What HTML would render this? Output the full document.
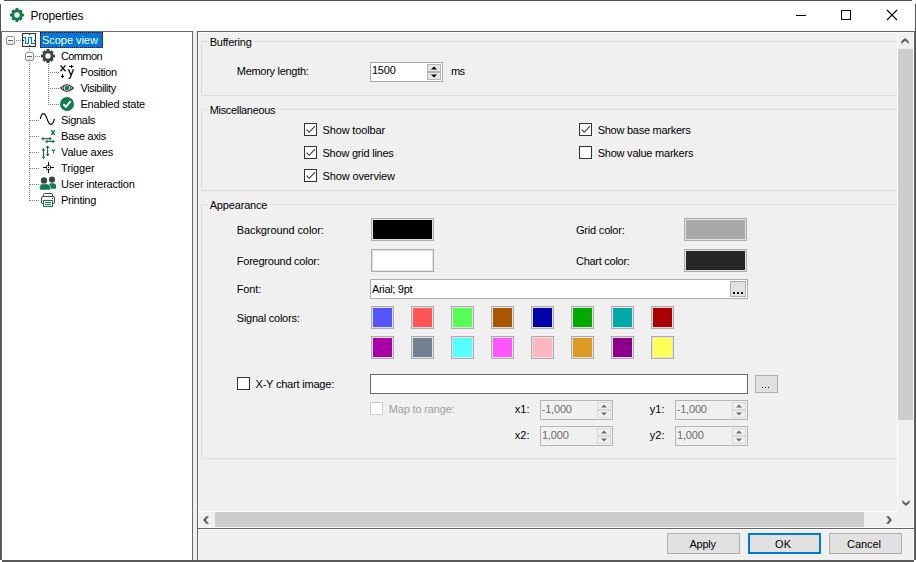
<!DOCTYPE html>
<html>
<head>
<meta charset="utf-8">
<title>Properties</title>
<style>
html,body{margin:0;padding:0;}
body{width:916px;height:562px;position:relative;overflow:hidden;background:#fff;font-family:"Liberation Sans",sans-serif;font-size:11px;color:#000;}
.a{position:absolute;}
.t{position:absolute;white-space:nowrap;line-height:14px;height:14px;font-size:11px;}
.tr{position:absolute;white-space:nowrap;line-height:16px;height:16px;font-size:11px;}
.gb{position:absolute;border:1px solid #dcdcdc;box-sizing:border-box;}
.gl{position:absolute;background:#f0f0f0;padding:0 2px 0 1px;white-space:nowrap;line-height:14px;height:14px;font-size:11px;}
.cb{position:absolute;width:13px;height:13px;box-sizing:border-box;border:1px solid #333;background:#fff;}
.cb.dis{border-color:#ccc;}
.sw{position:absolute;box-sizing:border-box;border:1px solid #adadad;background:#e1e1e1;}
.sw i{position:absolute;left:1px;top:1px;right:1px;bottom:1px;}
.sp{position:absolute;box-sizing:border-box;border:1px solid #a9a9a9;background:#fff;width:73px;height:20px;}
.sp.dis{border-color:#b4b4ba;background:#f0f0f0;color:#6d6d6d;}
.sb{position:absolute;left:56px;width:14px;height:8px;background:#e6e6e6;box-sizing:border-box;border:1px solid #b4b4b4;overflow:visible;}
.sb svg{position:absolute;left:-1px;top:-1px;}
.sb.dis{background:#efefef;border-color:#d9d9d9;}
.hd{position:absolute;height:1px;background-image:linear-gradient(to right,#808080 50%,transparent 50%);background-size:2px 1px;}
.vd{position:absolute;width:1px;background-image:linear-gradient(to bottom,#808080 50%,transparent 50%);background-size:1px 2px;}
.ex{width:9px;height:9px;box-sizing:border-box;border:1px solid #919191;border-radius:2px;background:linear-gradient(#fff,#fff 40%,#dcdcdc);}
.ex i{position:absolute;left:1px;top:3px;width:5px;height:1px;background:#4b63a7;}
.btn{position:absolute;box-sizing:border-box;border:1px solid #adadad;background:#e1e1e1;text-align:center;font-size:12px;}
</style>
</head>
<body>
<!-- window frame -->
<div class="a" style="left:4px;top:0;width:908px;height:1px;background:#555;"></div>
<div class="a" style="left:0;top:4px;width:1px;height:556px;background:#555;"></div>
<div class="a" style="left:915px;top:4px;width:1px;height:556px;background:#555;"></div>
<div class="a" style="left:2px;top:560px;width:912px;height:2px;background:#5a5a5a;"></div>

<div class="a" style="left:1px;top:558px;width:2px;height:2px;background:#5a5a5a;"></div>
<div class="a" style="left:0px;top:558px;width:1px;height:2px;background:#555;"></div>
<!-- title bar -->
<svg class="a" style="left:10px;top:8px;" width="14" height="14" viewBox="0 0 14 14"><g fill="#107c4c"><circle cx="7" cy="7" r="5.4"/><rect x="5.4" y="0" width="3.2" height="14" rx="0.9"/><rect x="0" y="5.4" width="14" height="3.2" rx="0.9"/><rect x="5.4" y="0.3" width="3.2" height="13.4" rx="0.9" transform="rotate(45 7 7)"/><rect x="5.4" y="0.3" width="3.2" height="13.4" rx="0.9" transform="rotate(-45 7 7)"/></g><circle cx="7" cy="7" r="2.7" fill="#fff"/></svg>
<div class="a" style="left:30.5px;top:8px;font-size:12px;line-height:16px;white-space:nowrap;letter-spacing:-0.2px;">Properties</div>
<div class="a" style="left:796px;top:15px;width:10px;height:1px;background:#000;"></div>
<div class="a" style="left:841px;top:10px;width:10px;height:10px;box-sizing:border-box;border:1px solid #000;"></div>
<svg class="a" style="left:886px;top:9px;" width="12" height="12" viewBox="0 0 12 12"><path d="M1 1 L11 11 M11 1 L1 11" stroke="#000" stroke-width="1.1" fill="none"/></svg>

<!-- tree panel -->
<div class="a" id="tree" style="left:1px;top:31px;width:192px;height:529px;box-sizing:border-box;border:1px solid #6a6a6a;border-bottom:none;background:#fff;"></div>


<!-- tree content -->
<div class="a" style="left:40px;top:32px;width:63px;height:16px;background:#0078d7;box-sizing:border-box;border:1px dotted #000;"></div>
<!-- tree lines -->
<div class="hd" style="left:16px;top:40px;width:6px;"></div>
<div class="vd" style="left:29px;top:48px;width:1px;height:4px;"></div>
<div class="hd" style="left:35px;top:56px;width:6px;"></div>
<div class="vd" style="left:29px;top:62px;height:139px;"></div>
<div class="vd" style="left:48px;top:64px;height:41px;"></div>
<div class="hd" style="left:50px;top:72px;width:10px;"></div>
<div class="hd" style="left:50px;top:88px;width:10px;"></div>
<div class="hd" style="left:50px;top:104px;width:10px;"></div>
<div class="hd" style="left:30px;top:120px;width:10px;"></div>
<div class="hd" style="left:30px;top:136px;width:10px;"></div>
<div class="hd" style="left:30px;top:152px;width:10px;"></div>
<div class="hd" style="left:30px;top:168px;width:10px;"></div>
<div class="hd" style="left:30px;top:184px;width:10px;"></div>
<div class="hd" style="left:30px;top:200px;width:10px;"></div>
<!-- icons -->
<svg class="a" style="left:22px;top:33px;" width="14" height="14" viewBox="0 0 14 14"><rect x="0.55" y="0.55" width="12.9" height="12.9" fill="#fff" stroke="#2b3535" stroke-width="1.1"/><path d="M7.5 1 V2 M7.5 12 V13 M1 7.5 H2 M12 7.5 H13" stroke="#2b3535" stroke-width="1.1"/><path d="M1 4.5 H3.5 V10.5 H6.5 V4.5 H9.5 V10.5 H13" stroke="#0a78d4" stroke-width="1.15" fill="none"/></svg>
<svg class="a" style="left:41px;top:49px;" width="14" height="14" viewBox="0 0 14 14"><g fill="#3b4546"><circle cx="7" cy="7" r="5.4"/><rect x="5.4" y="0" width="3.2" height="14" rx="0.9"/><rect x="0" y="5.4" width="14" height="3.2" rx="0.9"/><rect x="5.4" y="0.3" width="3.2" height="13.4" rx="0.9" transform="rotate(45 7 7)"/><rect x="5.4" y="0.3" width="3.2" height="13.4" rx="0.9" transform="rotate(-45 7 7)"/></g><circle cx="7" cy="7" r="2.7" fill="#fff"/></svg>
<svg class="a" style="left:60px;top:65px;" width="14" height="14" viewBox="0 0 14 14"><g stroke="#111" fill="none" stroke-width="1.35"><path d="M0.5 0.4 L5.5 6.2 M5.5 0.4 L0.5 6.2"/><path d="M8.5 4.2 L11 10.2 M13.5 4.2 L10.3 12.4 Q9.8 13.7 8.6 13.5"/></g><g stroke="#000" stroke-width="1" fill="none"><path d="M2.5 9 V13 M1 11.5 H4"/><path d="M9 1.5 H13.4 M11.5 0 V3"/></g></svg>
<svg class="a" style="left:60px;top:81px;" width="14" height="14" viewBox="0 0 14 14"><path d="M0.7 7 Q7 0.3 13.3 7 Q7 13.7 0.7 7 Z" fill="#fff" stroke="#3b4546" stroke-width="1.4"/><path d="M4.6 4.3 Q2.2 7 4.6 9.7 M9.4 4.3 Q11.8 7 9.4 9.7" fill="none" stroke="#596262" stroke-width="1.1"/><circle cx="7" cy="7" r="2.3" fill="#107c4c"/></svg>
<svg class="a" style="left:60px;top:97px;" width="14" height="14" viewBox="0 0 14 14"><circle cx="7" cy="7" r="7" fill="#107c4c"/><path d="M3.4 7.3 L6 9.8 L10.6 4.2" stroke="#fff" stroke-width="1.9" fill="none"/></svg>
<svg class="a" style="left:39px;top:112px;" width="17" height="14" viewBox="0 0 17 14"><path d="M1.3 7 C2.8 -0.2 5.6 -0.2 8.1 7 C10.6 14.2 13.4 14.2 15.4 7" stroke="#000" stroke-width="1.1" fill="none"/></svg>
<svg class="a" style="left:40px;top:129px;" width="16" height="15" viewBox="0 0 16 15"><g stroke="#107c4c" stroke-width="1.35" fill="none"><path d="M11.2 1.1 L14.8 6 M14.8 1.1 L11.2 6"/></g><g stroke="#4a5252" stroke-width="1.2" fill="none"><path d="M2 9.7 H11"/></g><path d="M1 9.7 L3.5 7.7 V11.7 Z M12 9.7 L9.5 7.7 V11.7 Z" fill="#4a5252"/><path d="M6 12.4 H14" stroke="#107c4c" stroke-width="1.2"/><path d="M5 12.4 L7.5 10.4 V14.4 Z M15 12.4 L12.5 10.4 V14.4 Z" fill="#107c4c"/></svg>
<svg class="a" style="left:40px;top:145px;" width="16" height="15" viewBox="0 0 16 15"><path d="M3.5 4 V13" stroke="#107c4c" stroke-width="1.2"/><path d="M3.5 3 L1.5 5.5 H5.5 Z M3.5 14 L1.5 11.5 H5.5 Z" fill="#107c4c"/><path d="M7.6 1.5 V10.5" stroke="#4a5252" stroke-width="1.2"/><path d="M7.6 0.4 L5.6 2.9 H9.6 Z M7.6 11.6 L5.6 9.1 H9.6 Z" fill="#4a5252"/><path d="M12 4.3 L13.5 6.3 L15 4.3 M13.5 6.3 V8.6" stroke="#107c4c" stroke-width="1.1" fill="none"/></svg>
<svg class="a" style="left:43px;top:162px;" width="11" height="11" viewBox="0 0 11 11"><path d="M5.5 0 V3.5 M5.5 7.5 V11 M0 5.5 H3.5 M7.5 5.5 H11" stroke="#000" stroke-width="1"/><rect x="3.5" y="3.5" width="4" height="4" rx="1" fill="#fff" stroke="#000" stroke-width="1"/><rect x="5" y="5" width="1" height="1" fill="#000"/></svg>
<svg class="a" style="left:39px;top:176px;" width="18" height="15" viewBox="0 0 18 15"><path d="M9.8 12.7 V10 Q9.8 7.2 12.2 7.2 H14.4 Q17 7.2 17 10 V12.7 Z" fill="#107c4c"/><circle cx="13" cy="3.6" r="3.1" fill="#3b4546"/><path d="M0.6 14 V11.2 Q0.6 7.8 3.6 7.8 H7.4 Q11.4 7.8 11.4 11.4 V14 Z" fill="#107c4c" stroke="#fff" stroke-width="0.6"/><circle cx="5" cy="4.4" r="3.2" fill="#3b4546"/></svg>
<svg class="a" style="left:41px;top:193px;" width="15" height="15" viewBox="0 0 15 15"><path d="M2.5 3.5 V1.5 Q2.5 0.5 3.5 0.5 H10.5 Q11.5 0.5 11.5 1.5 V3.5" fill="#fff" stroke="#3b4546" stroke-width="1"/><rect x="0.5" y="3.5" width="13" height="7" rx="1.8" fill="#fff" stroke="#3b4546" stroke-width="1.1"/><rect x="11" y="5" width="1" height="1" fill="#3b4546"/><rect x="2.5" y="7.5" width="9" height="6" fill="#fff" stroke="#107c4c" stroke-width="1"/><path d="M4 9.5 H10 M4 11.5 H10" stroke="#107c4c" stroke-width="1"/></svg>
<!-- expanders -->
<div class="a ex" style="left:6px;top:36px;"><i></i></div>
<div class="a ex" style="left:25px;top:52px;"><i></i></div>

<div class="a" style="left:193px;top:31px;width:4px;height:529px;background:#f0f0f0;"></div>

<!-- right container -->
<div class="a" style="left:197px;top:31px;width:718px;height:529px;box-sizing:border-box;border:1px solid #646464;border-bottom:none;background:#f0f0f0;"></div>
<!-- scroll content clip -->
<div class="a" id="clip" style="left:198px;top:32px;width:700px;height:479px;overflow:hidden;background:#f0f0f0;">
<div class="a" style="left:-198px;top:-32px;width:916px;height:562px;">
<div class="gb" style="left:201px;top:41px;width:720px;height:55px;"></div>
<div class="gb" style="left:201px;top:109px;width:720px;height:82px;"></div>
<div class="gb" style="left:201px;top:204px;width:720px;height:255px;"></div>
<div class="a" style="left:208px;top:41px;width:45px;height:1px;background:#f0f0f0;"></div>
<div class="a" style="left:208px;top:109px;width:71px;height:1px;background:#f0f0f0;"></div>
<div class="a" style="left:208px;top:204px;width:62px;height:1px;background:#f0f0f0;"></div>
<div class="sp" style="left:370px;top:62px;"><div class="sb" style="top:1px;"><svg width="14" height="8" viewBox="0 0 14 8"><path d="M4 5.5 L7 2.5 L10 5.5 Z" fill="#000"/></svg></div><div class="sb" style="top:9px;"><svg width="14" height="8" viewBox="0 0 14 8"><path d="M4 2.5 L7 5.5 L10 2.5 Z" fill="#000"/></svg></div></div>
<div class="cb" style="left:304px;top:123px;"><svg width="11" height="11" viewBox="0 0 11 11" style="position:absolute;left:0;top:0"><path d="M1.6 5.6 L4.2 8.3 L10 2.2" stroke="#333" stroke-width="1.1" fill="none"/></svg></div>
<div class="cb" style="left:304px;top:146px;"><svg width="11" height="11" viewBox="0 0 11 11" style="position:absolute;left:0;top:0"><path d="M1.6 5.6 L4.2 8.3 L10 2.2" stroke="#333" stroke-width="1.1" fill="none"/></svg></div>
<div class="cb" style="left:304px;top:169px;"><svg width="11" height="11" viewBox="0 0 11 11" style="position:absolute;left:0;top:0"><path d="M1.6 5.6 L4.2 8.3 L10 2.2" stroke="#333" stroke-width="1.1" fill="none"/></svg></div>
<div class="cb" style="left:579px;top:123px;"><svg width="11" height="11" viewBox="0 0 11 11" style="position:absolute;left:0;top:0"><path d="M1.6 5.6 L4.2 8.3 L10 2.2" stroke="#333" stroke-width="1.1" fill="none"/></svg></div>
<div class="cb" style="left:579px;top:146px;"></div>
<div class="sw" style="left:371px;top:218px;width:63px;height:23px;"><i style="background:#000"></i></div>
<div class="sw" style="left:371px;top:249px;width:63px;height:23px;"><i style="background:#fff"></i></div>
<div class="sw" style="left:684px;top:218px;width:63px;height:23px;"><i style="background:#a9a9a9"></i></div>
<div class="sw" style="left:684px;top:249px;width:63px;height:23px;"><i style="background:#262626"></i></div>
<div class="a" style="left:370px;top:279px;width:378px;height:20px;box-sizing:border-box;border:1px solid #abadb3;background:#fff;"></div>
<div class="a" style="left:730px;top:281px;width:16px;height:16px;box-sizing:border-box;border:1px solid #adadad;background:#e1e1e1;"></div>
<div class="a" style="left:733px;top:292px;width:2px;height:2px;background:#000;"></div>
<div class="a" style="left:737px;top:292px;width:2px;height:2px;background:#000;"></div>
<div class="a" style="left:741px;top:292px;width:2px;height:2px;background:#000;"></div>
<div class="sw" style="left:371px;top:306px;width:23px;height:23px;"><i style="background:#5555ff"></i></div>
<div class="sw" style="left:411px;top:306px;width:23px;height:23px;"><i style="background:#ff5555"></i></div>
<div class="sw" style="left:451px;top:306px;width:23px;height:23px;"><i style="background:#55ff55"></i></div>
<div class="sw" style="left:491px;top:306px;width:23px;height:23px;"><i style="background:#aa5500"></i></div>
<div class="sw" style="left:531px;top:306px;width:23px;height:23px;"><i style="background:#0000aa"></i></div>
<div class="sw" style="left:571px;top:306px;width:23px;height:23px;"><i style="background:#00aa00"></i></div>
<div class="sw" style="left:611px;top:306px;width:23px;height:23px;"><i style="background:#00aaaa"></i></div>
<div class="sw" style="left:651px;top:306px;width:23px;height:23px;"><i style="background:#aa0000"></i></div>
<div class="sw" style="left:371px;top:336px;width:23px;height:23px;"><i style="background:#aa00aa"></i></div>
<div class="sw" style="left:411px;top:336px;width:23px;height:23px;"><i style="background:#708090"></i></div>
<div class="sw" style="left:451px;top:336px;width:23px;height:23px;"><i style="background:#55ffff"></i></div>
<div class="sw" style="left:491px;top:336px;width:23px;height:23px;"><i style="background:#ff55ff"></i></div>
<div class="sw" style="left:531px;top:336px;width:23px;height:23px;"><i style="background:#ffb6c1"></i></div>
<div class="sw" style="left:571px;top:336px;width:23px;height:23px;"><i style="background:#dc9a22"></i></div>
<div class="sw" style="left:611px;top:336px;width:23px;height:23px;"><i style="background:#8b008b"></i></div>
<div class="sw" style="left:651px;top:336px;width:23px;height:23px;"><i style="background:#ffff55"></i></div>
<div class="cb" style="left:237px;top:377px;"></div>
<div class="a" style="left:370px;top:374px;width:378px;height:20px;box-sizing:border-box;border:1px solid #6a6a6a;background:#fff;"></div>
<div class="a" style="left:755px;top:375px;width:23px;height:18px;box-sizing:border-box;border:1px solid #adadad;background:#e1e1e1;"></div>
<div class="a" style="left:762px;top:387px;width:1px;height:1px;background:#000;"></div>
<div class="a" style="left:765px;top:387px;width:1px;height:1px;background:#000;"></div>
<div class="a" style="left:768px;top:387px;width:1px;height:1px;background:#000;"></div>
<div class="cb dis" style="left:370px;top:402px;"></div>
<div class="sp dis" style="left:540px;top:400px;"><div class="sb dis" style="top:1px;"><svg width="14" height="8" viewBox="0 0 14 8"><path d="M4 5.5 L7 2.5 L10 5.5 Z" fill="#6d6d6d"/></svg></div><div class="sb dis" style="top:9px;"><svg width="14" height="8" viewBox="0 0 14 8"><path d="M4 2.5 L7 5.5 L10 2.5 Z" fill="#6d6d6d"/></svg></div></div>
<div class="sp dis" style="left:540px;top:426px;"><div class="sb dis" style="top:1px;"><svg width="14" height="8" viewBox="0 0 14 8"><path d="M4 5.5 L7 2.5 L10 5.5 Z" fill="#6d6d6d"/></svg></div><div class="sb dis" style="top:9px;"><svg width="14" height="8" viewBox="0 0 14 8"><path d="M4 2.5 L7 5.5 L10 2.5 Z" fill="#6d6d6d"/></svg></div></div>
<div class="sp dis" style="left:675px;top:400px;"><div class="sb dis" style="top:1px;"><svg width="14" height="8" viewBox="0 0 14 8"><path d="M4 5.5 L7 2.5 L10 5.5 Z" fill="#6d6d6d"/></svg></div><div class="sb dis" style="top:9px;"><svg width="14" height="8" viewBox="0 0 14 8"><path d="M4 2.5 L7 5.5 L10 2.5 Z" fill="#6d6d6d"/></svg></div></div>
<div class="sp dis" style="left:675px;top:426px;"><div class="sb dis" style="top:1px;"><svg width="14" height="8" viewBox="0 0 14 8"><path d="M4 5.5 L7 2.5 L10 5.5 Z" fill="#6d6d6d"/></svg></div><div class="sb dis" style="top:9px;"><svg width="14" height="8" viewBox="0 0 14 8"><path d="M4 2.5 L7 5.5 L10 2.5 Z" fill="#6d6d6d"/></svg></div></div>
</div>
</div>
<div class="a" style="left:897px;top:32px;width:1px;height:480px;background:#fff;"></div>
<div class="a" style="left:198px;top:511px;width:700px;height:1px;background:#fff;"></div>
<div class="a" style="left:198px;top:32px;width:716px;height:1px;background:#fafafa;"></div>
<div class="a" style="left:198px;top:32px;width:1px;height:528px;background:#fafafa;"></div>
<div class="a" style="left:913px;top:32px;width:1px;height:528px;background:#fafafa;"></div>
<div class="a" style="left:198px;top:527px;width:716px;height:1px;background:#fafafa;"></div>
<div class="a" style="left:198px;top:529px;width:716px;height:1px;background:#fafafa;"></div>
<div class="a" style="left:198px;top:528px;width:716px;height:1px;background:#646464;"></div>
<!-- scrollbars -->
<div class="a" style="left:898px;top:49px;width:15px;height:371px;background:#cdcdcd;"></div>
<div class="a" style="left:215px;top:512px;width:649px;height:15px;background:#cdcdcd;"></div>
<svg class="a" style="left:899.4px;top:34.9px;" width="12" height="12" viewBox="0 0 12 12"><polygon points="6.0,3.0 9.7,6.2 9.7,9.0 6.0,5.8 2.3,9.0 2.3,6.2" fill="#606060"/></svg>
<svg class="a" style="left:899.6px;top:496.9px;" width="12" height="12" viewBox="0 0 12 12"><polygon points="6.0,9.0 9.7,5.8 9.7,3.0 6.0,6.2 2.3,3.0 2.3,5.8" fill="#606060"/></svg>
<svg class="a" style="left:200.4px;top:513.5px;" width="12" height="12" viewBox="0 0 12 12"><polygon points="3.0,6.0 6.2,9.7 9.0,9.7 5.8,6.0 9.0,2.3 6.2,2.3" fill="#606060"/></svg>
<svg class="a" style="left:883.0px;top:513.5px;" width="12" height="12" viewBox="0 0 12 12"><polygon points="9.0,6.0 5.8,9.7 3.0,9.7 6.2,6.0 3.0,2.3 5.8,2.3" fill="#606060"/></svg>
<!-- buttons -->
<div class="btn" style="left:667px;top:533px;width:73px;height:21px;"></div>
<div class="btn" style="left:748px;top:533px;width:73px;height:21px;border:2px solid #0078d7;"></div>
<div class="btn" style="left:829px;top:533px;width:73px;height:21px;"></div>
<div class="t" style="left:42.0px;top:33.0px;letter-spacing:-0.04px;color:#fff;">Scope view</div>
<div class="t" style="left:61.0px;top:49.0px;letter-spacing:-0.62px;">Common</div>
<div class="t" style="left:80.5px;top:65.0px;letter-spacing:-0.37px;">Position</div>
<div class="t" style="left:80.5px;top:81.0px;letter-spacing:-0.43px;">Visibility</div>
<div class="t" style="left:80.5px;top:97.0px;letter-spacing:-0.22px;">Enabled state</div>
<div class="t" style="left:61.0px;top:113.0px;letter-spacing:-0.30px;">Signals</div>
<div class="t" style="left:61.0px;top:129.0px;letter-spacing:-0.31px;">Base axis</div>
<div class="t" style="left:61.0px;top:145.0px;letter-spacing:-0.14px;">Value axes</div>
<div class="t" style="left:61.0px;top:161.0px;letter-spacing:-0.12px;">Trigger</div>
<div class="t" style="left:61.0px;top:177.0px;letter-spacing:-0.21px;">User interaction</div>
<div class="t" style="left:61.0px;top:193.0px;letter-spacing:-0.29px;">Printing</div>
<div class="t" style="left:209.7px;top:35.0px;letter-spacing:-0.21px;">Buffering</div>
<div class="t" style="left:236.8px;top:64.0px;letter-spacing:-0.29px;">Memory length:</div>
<div class="t" style="left:371.9px;top:63.2px;letter-spacing:-0.17px;">1500</div>
<div class="t" style="left:450.9px;top:64.0px;letter-spacing:-0.49px;">ms</div>
<div class="t" style="left:209.7px;top:103.0px;letter-spacing:-0.32px;">Miscellaneous</div>
<div class="t" style="left:322.5px;top:123.0px;letter-spacing:-0.14px;">Show toolbar</div>
<div class="t" style="left:322.5px;top:146.0px;letter-spacing:-0.23px;">Show grid lines</div>
<div class="t" style="left:322.5px;top:169.0px;letter-spacing:-0.12px;">Show overview</div>
<div class="t" style="left:597.7px;top:123.0px;letter-spacing:-0.26px;">Show base markers</div>
<div class="t" style="left:597.7px;top:146.0px;letter-spacing:-0.23px;">Show value markers</div>
<div class="t" style="left:209.7px;top:198.0px;letter-spacing:-0.17px;">Appearance</div>
<div class="t" style="left:236.8px;top:223.0px;letter-spacing:-0.10px;">Background color:</div>
<div class="t" style="left:236.8px;top:254.0px;letter-spacing:-0.24px;">Foreground color:</div>
<div class="t" style="left:576.0px;top:223.0px;letter-spacing:-0.20px;">Grid color:</div>
<div class="t" style="left:576.0px;top:254.0px;letter-spacing:-0.27px;">Chart color:</div>
<div class="t" style="left:236.8px;top:282.0px;letter-spacing:-0.16px;">Font:</div>
<div class="t" style="left:371.9px;top:282.0px;letter-spacing:-0.31px;">Arial; 9pt</div>
<div class="t" style="left:236.8px;top:311.0px;letter-spacing:-0.24px;">Signal colors:</div>
<div class="t" style="left:255.5px;top:377.0px;letter-spacing:-0.20px;">X-Y chart image:</div>
<div class="t" style="left:388.7px;top:402.0px;letter-spacing:-0.15px;color:#a0a0a0;">Map to range:</div>
<div class="t" style="left:514.7px;top:402.0px;letter-spacing:0.04px;">x1:</div>
<div class="t" style="left:514.7px;top:428.0px;letter-spacing:0.04px;">x2:</div>
<div class="t" style="left:649.7px;top:402.0px;letter-spacing:0.10px;">y1:</div>
<div class="t" style="left:649.7px;top:428.0px;letter-spacing:0.10px;">y2:</div>
<div class="t" style="left:541.7px;top:401.6px;letter-spacing:-0.18px;color:#6d6d6d;">-1,000</div>
<div class="t" style="left:542.0px;top:427.6px;letter-spacing:-0.17px;color:#6d6d6d;">1,000</div>
<div class="t" style="left:676.7px;top:401.6px;letter-spacing:-0.18px;color:#6d6d6d;">-1,000</div>
<div class="t" style="left:677.0px;top:427.6px;letter-spacing:-0.17px;color:#6d6d6d;">1,000</div>
<div class="t" style="left:689.5px;top:537.0px;letter-spacing:-0.25px;">Apply</div>
<div class="t" style="left:774.9px;top:537.0px;letter-spacing:0.35px;">OK</div>
<div class="t" style="left:847.1px;top:537.0px;letter-spacing:-0.07px;">Cancel</div>

</body>
</html>
